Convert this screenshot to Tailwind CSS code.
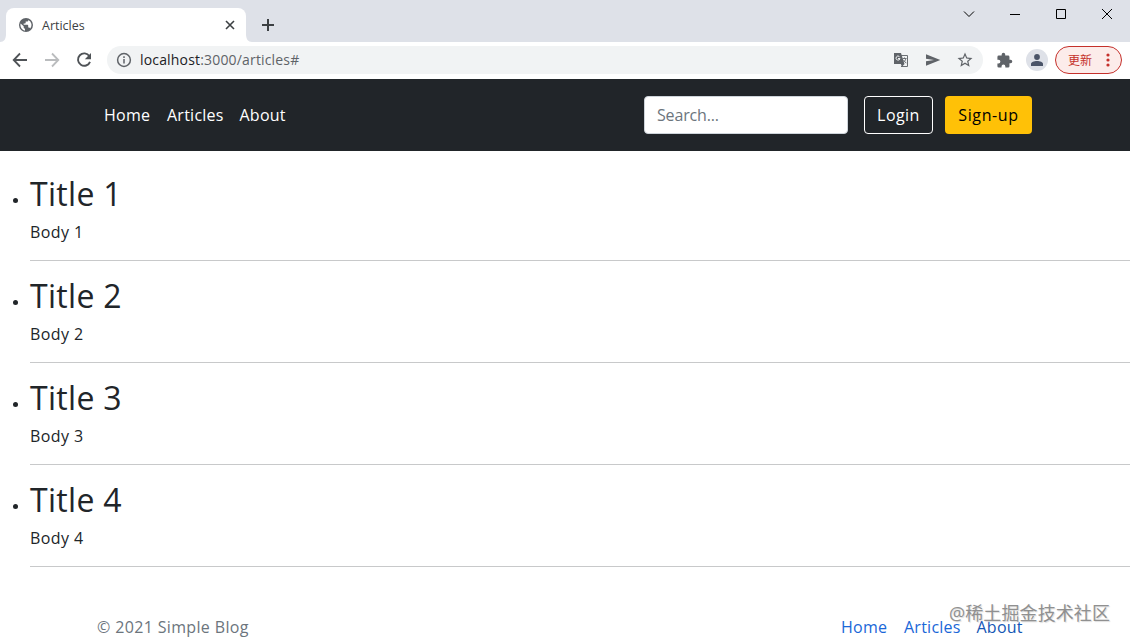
<!DOCTYPE html>
<html lang="en">
<head>
    <meta charset="UTF-8">
    <meta name="viewport" content="width=device-width, initial-scale=1.0">
    <title>Articles</title>
    <script src="https://cdn.jsdelivr.net/npm/@tailwindcss/browser@4"></script>
</head>
<body class="relative w-[1130px] h-[643px] overflow-hidden bg-white text-[#212529] font-['Open_Sans','Noto_Sans_CJK_SC',sans-serif]">
    <!-- Tab strip -->
    <div class="h-[42px] bg-[#dee1e8] flex justify-between">
        <div class="flex items-end">
            <svg class="w-1.5 h-2" viewBox="0 0 6 8"><path d="M6 0v8H0c4 0 6-3 6-8z" fill="#fff"/></svg>
            <div class="w-[240px] h-[34px] bg-white rounded-t-lg flex items-center pl-3 pr-[11px] text-[#3c4043]">
                <svg class="w-4 h-4" viewBox="0 0 24 24" fill="#5f6368"><path d="M12 1.500a10.500 10.500 0 1 0 0 21 10.500 10.500 0 0 0 0-21zM3.600 12c0-.7.100-1.400.3-2.100L8.500 14v1.500c0 1.100.9 2 2 2v3C6.600 19.800 3.600 16.300 3.600 12zm14.700 5.300c-.3-.9-1.100-1.500-2-1.500h-1v-3c0-.6-.4-1-1-1H8.500v-2h2c.6 0 1-.4 1-1v-2h2c1.100 0 2-.9 2-2v-.4a8.400 8.400 0 0 1 2.800 12.900z"/></svg>
                <span class="ml-2 pt-0.5 text-[12.500px] flex-1">Articles</span>
                <svg class="w-2.5 h-2.5" viewBox="0 0 10 10" stroke="#3c4043" stroke-width="1.600"><path d="M1 1l8 8M9 1L1 9"/></svg>
            </div>
            <svg class="w-1.5 h-2" viewBox="0 0 6 8"><path d="M0 0v8h6C2 8 0 5 0 0z" fill="#fff"/></svg>
            <svg class="w-3 h-3 ml-2.5 mb-[11px]" viewBox="0 0 12 12" stroke="#3c4043" stroke-width="2"><path d="M6 0v12M0 6h12"/></svg>
        </div>
        <div class="flex h-7 items-center gap-[34px] pr-[17px] fill-none stroke-black">
            <svg class="w-3 h-3" viewBox="0 0 12 12"><path d="M1 3.500l5 5 5-5"/></svg>
            <svg class="w-3 h-3" viewBox="0 0 12 12"><path d="M1 6.500h10"/></svg>
            <svg class="w-3 h-3" viewBox="0 0 12 12"><path d="M1.500 1.500h9v9h-9z"/></svg>
            <svg class="w-3 h-3" viewBox="0 0 12 12"><path d="M1 1l10 10M11 1L1 11"/></svg>
        </div>
    </div>

    <!-- Address bar -->
    <div class="h-[37px] bg-white flex items-center pl-3 pr-2 pb-px">
        <svg class="w-4 h-4" viewBox="0 0 16 16" fill="none" stroke="#4f5357" stroke-width="1.800"><path d="M15 8H2M8 1.500L1.700 8 8 14.500"/></svg>
        <svg class="w-4 h-4 ml-4" viewBox="0 0 16 16" fill="none" stroke="#babcbe" stroke-width="1.800"><path d="M1 8h13M8 1.500L14.300 8 8 14.500"/></svg>
        <svg class="w-4 h-4 ml-4" viewBox="0 0 16 16" fill="none" stroke="#4f5357" stroke-width="1.900"><path d="M13.400 4.200A6.200 6.200 0 1 0 14 9.800"/><path d="M15 1v6.200H8.800z" fill="#4f5357" stroke="none"/></svg>
        <div class="ml-[15px] w-[876px] h-7 rounded-full bg-[#f1f3f4] flex items-center pl-2.5 pr-[9px] text-[#5f6368]">
            <svg class="w-4 h-4 -ml-px" viewBox="0 0 16 16" fill="none" stroke="#5f6368" stroke-width="1.500"><circle cx="8" cy="8" r="6.400"/><path d="M8 7v4.500M8 4.300v1.600"/></svg>
            <span class="ml-2 pb-0.5 text-[14px] tracking-[0.170px] flex-1"><span class="text-[#202124]">localhost</span>:3000/articles#</span>
            <svg class="w-4 h-4" viewBox="0 0 16 16"><path d="M6 3.500h8.500v11H8" fill="none" stroke="#6b6f73"/><path d="M1 1h7l3.500 11H1z" fill="#5f6368"/><path d="M7.800 12h3.700L9 14.800z" fill="#5f6368"/><path d="M6.500 4.700a2 2 0 1 0 .5 1.800H5" fill="none" stroke="#f1f3f4"/><path d="M9.500 6.500h4M11.500 5.500v1M12.800 6.500c-.3 2-1.400 3-2.200 3.700M10.500 8.200l2.800 3" fill="none" stroke="#6b6f73"/></svg>
            <svg class="w-4 h-4 ml-4" viewBox="0 0 16 16" fill="#5f6368"><path d="M1 2.300L15.300 8 1 13.700V9.300L9 8 1 6.700z"/></svg>
            <svg class="w-[18px] h-[18px] ml-[15px]" viewBox="0 0 24 24" fill="#5f6368"><path d="M22 9.240l-7.190-.62L12 2 9.190 8.630 2 9.240l5.460 4.730L5.820 21 12 17.270 18.180 21l-1.630-7.030L22 9.240zM12 15.400l-3.760 2.270 1-4.280-3.320-2.880 4.380-.38L12 6.100l1.710 4.040 4.380.38-3.320 2.880 1 4.280L12 15.400z"/></svg>
        </div>
        <svg class="w-[17px] h-[17px] ml-[13px]" viewBox="0 0 24 24" fill="#5f6368"><path d="M20.500 11H19V7a2 2 0 0 0-2-2h-4V3.500a2.500 2.500 0 0 0-5 0V5H4a2 2 0 0 0-2 2v3.800h1.500a2.700 2.700 0 0 1 0 5.400H2V20a2 2 0 0 0 2 2h3.800v-1.500a2.700 2.700 0 0 1 5.400 0V22H17a2 2 0 0 0 2-2v-4h1.500a2.500 2.500 0 0 0 0-5z"/></svg>
        <div class="ml-[13px] w-[22px] h-[22px] rounded-full bg-[#dee1e8] flex items-center justify-center">
            <svg class="w-3 h-3" viewBox="0 0 12 12" fill="#4a5468"><circle cx="6" cy="3" r="2.900"/><path d="M0 12V10c0-2 3-3 6-3s6 1 6 3v2z"/></svg>
        </div>
        <div class="ml-auto w-[67px] h-7 rounded-full border border-[#c5302b] bg-[#fcecea] flex items-center pl-3 text-[#c5302b]">
            <span class="pt-0.5 text-[12px]">更新</span>
            <svg class="w-1 h-[14px] ml-[14px]" viewBox="0 0 4 14" fill="#c5302b"><circle cx="2" cy="2" r="1.600"/><circle cx="2" cy="7" r="1.600"/><circle cx="2" cy="12" r="1.600"/></svg>
        </div>
    </div>

    <!-- Site header -->
    <header class="h-[72px] bg-[#212529] flex items-center justify-between pl-[104px] pr-[98px] text-white">
        <nav class="flex gap-4 font-medium tracking-[0.250px]">
            <a href="#" class="w-[47px] whitespace-nowrap">Home</a>
            <a href="#" class="w-[56.500px] whitespace-nowrap">Articles</a>
            <a href="#" class="whitespace-nowrap">About</a>
        </nav>
        <div class="flex items-center">
            <input type="search" placeholder="Search..." class="w-[204px] h-[38px] rounded bg-white border border-[#ced4da] px-3 tracking-[-0.150px] placeholder:text-[#6c757d]">
            <button class="ml-4 w-[69px] h-[38px] rounded border border-white tracking-[0.450px] font-medium">Login</button>
            <button class="ml-3 w-[87px] h-[38px] rounded bg-[#ffc107] text-black tracking-[0.600px]">Sign-up</button>
        </div>
    </header>

    <!-- Articles -->
    <ul class="pt-[23px] pl-[30px]">
        <li class="relative h-[102px]">
            <span class="absolute left-[-17px] top-6 w-[5px] h-[5px] rounded-full bg-[#212529]"></span>
            <h2 class="pt-px text-[32px] leading-[38px] tracking-[0.300px] mb-[7px]">Title 1</h2>
            <p class="leading-6 tracking-[0.400px] mb-4">Body 1</p>
            <hr class="border-[#c8c9ca]">
        </li>
        <li class="relative h-[102px]">
            <span class="absolute left-[-17px] top-6 w-[5px] h-[5px] rounded-full bg-[#212529]"></span>
            <h2 class="pt-px text-[32px] leading-[38px] tracking-[0.300px] mb-[7px]">Title 2</h2>
            <p class="leading-6 tracking-[0.400px] mb-4">Body 2</p>
            <hr class="border-[#c8c9ca]">
        </li>
        <li class="relative h-[102px]">
            <span class="absolute left-[-17px] top-6 w-[5px] h-[5px] rounded-full bg-[#212529]"></span>
            <h2 class="pt-px text-[32px] leading-[38px] tracking-[0.300px] mb-[7px]">Title 3</h2>
            <p class="leading-6 tracking-[0.400px] mb-4">Body 3</p>
            <hr class="border-[#c8c9ca]">
        </li>
        <li class="relative h-[102px]">
            <span class="absolute left-[-17px] top-6 w-[5px] h-[5px] rounded-full bg-[#212529]"></span>
            <h2 class="pt-px text-[32px] leading-[38px] tracking-[0.300px] mb-[7px]">Title 4</h2>
            <p class="leading-6 tracking-[0.400px] mb-4">Body 4</p>
            <hr class="border-[#c8c9ca]">
        </li>
    </ul>

    <!-- Footer -->
    <footer class="mt-[33px] h-6 flex justify-between pl-[97px] pr-[106px] leading-6">
        <p class="text-[#6c757d] tracking-[0.350px]">© 2021 Simple Blog</p>
        <nav class="flex gap-4 text-[#1a67d8] tracking-[0.250px]">
            <a href="#" class="w-[47px] whitespace-nowrap">Home</a>
            <a href="#" class="w-[56.500px] whitespace-nowrap">Articles</a>
            <a href="#" class="w-[47.500px] whitespace-nowrap text-[#1557b5]">About</a>
        </nav>
    </footer>
    <span class="absolute left-[949px] top-[600px] text-[18px] leading-[26px] tracking-[0.100px] whitespace-nowrap text-[#909090] [text-shadow:1px_1px_1px_#ddd]">@稀土掘金技术社区</span>
</body>
</html>
